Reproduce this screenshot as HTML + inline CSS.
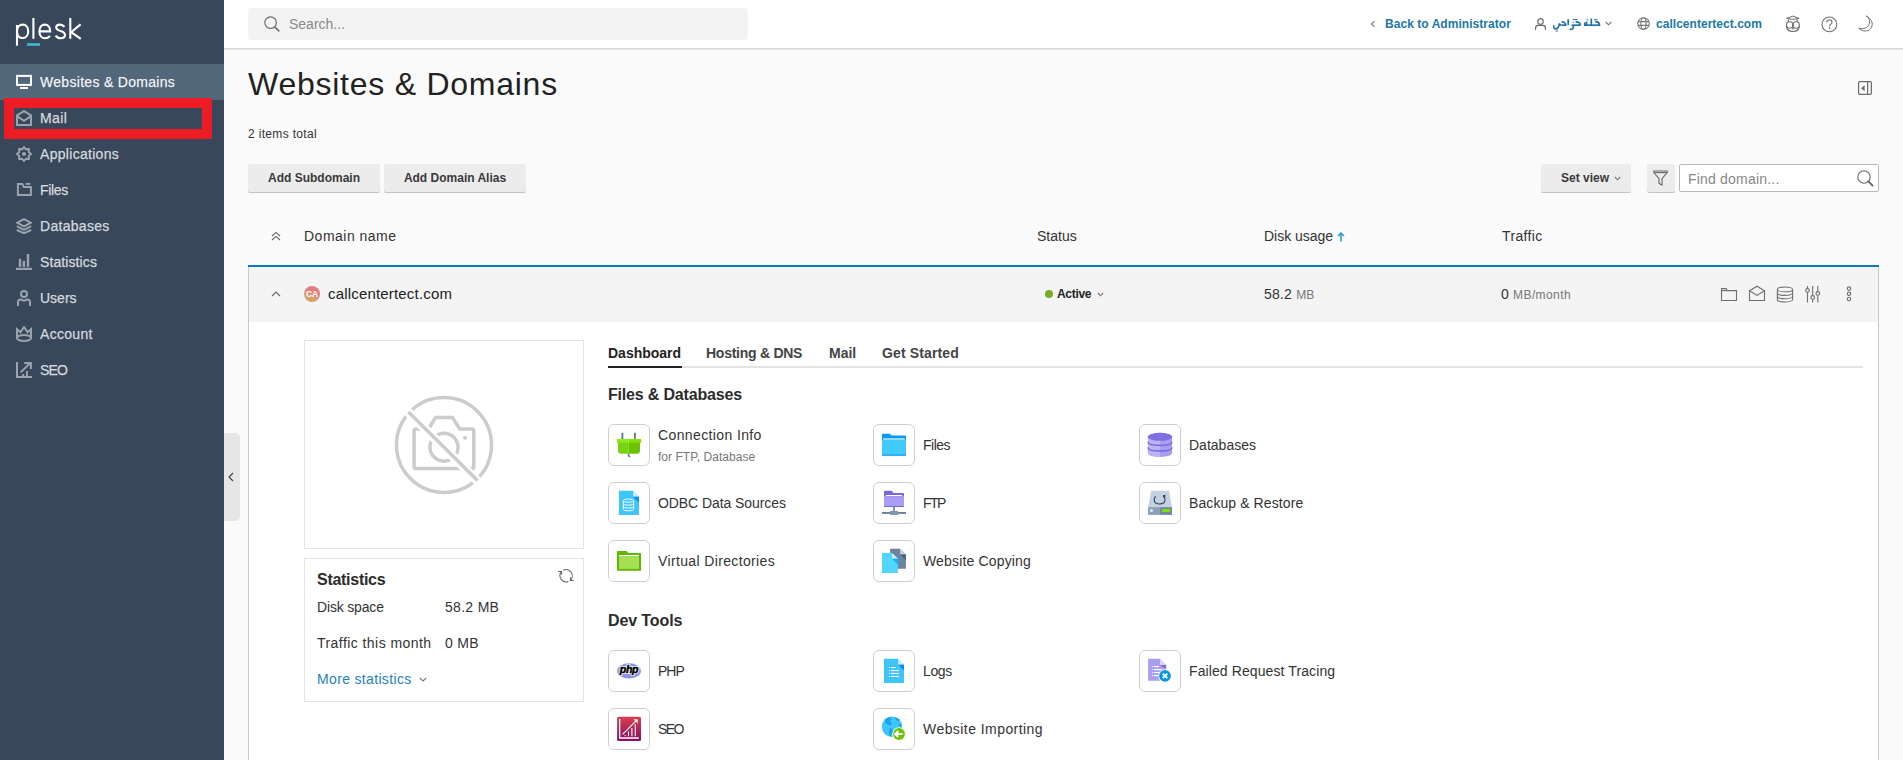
<!DOCTYPE html>
<html><head><meta charset="utf-8">
<style>
*{box-sizing:border-box;margin:0;padding:0}
html,body{width:1903px;height:760px;overflow:hidden;background:#fafafa;font-family:"Liberation Sans",sans-serif;color:#222}
.a{position:absolute;white-space:nowrap}
#side{position:absolute;left:0;top:0;width:224px;height:760px;background:#38475a}
.nav{position:absolute;left:0;width:224px;height:36px}
.nav .t{position:absolute;left:40px;top:10px;font-size:14px;line-height:16px;color:#d5d9de;-webkit-text-stroke:0.25px #d5d9de;letter-spacing:0.3px}
.nav svg{position:absolute;left:16px;top:10px}
#hdr{position:absolute;left:224px;top:0;width:1679px;height:49px;background:#fff;border-bottom:1px solid #d8d8d8;box-shadow:0 1px 1px rgba(0,0,0,.08)}
.link{color:#2078a8}
.btn{position:absolute;height:28px;background:#ececec;border-radius:2px;box-shadow:0 1px 0 #c4c4c4;font-size:13px;font-weight:bold;color:#3a3a3a;text-align:center;line-height:28px}
.ico{position:absolute;width:42px;height:42px;border:1px solid #d6d6d6;border-radius:5px;background:#fff}
.ico svg{position:absolute;left:8px;top:8px}
.it{position:absolute;font-size:14px;color:#333;letter-spacing:0.3px;white-space:nowrap}
</style></head>
<body>
<div id="side">
  <svg class="a" style="left:0;top:0" width="100" height="60" viewBox="0 0 100 60">
    <g fill="none" stroke="#fff" stroke-width="2.1" stroke-linecap="butt">
      <path d="M17 45.7V25"/>
      <path d="M17 31.2C17 27 19.5 24.6 22.8 24.6C26 24.6 28.2 27.2 28.2 31.2C28.2 35.4 26 38 22.8 38C19.6 38 17 35.8 17 32"/>
      <path d="M33.4 18V38.8"/>
      <path d="M39.6 31.4H50.2C50.2 27.2 48 24.6 44.8 24.6C41.6 24.6 39.4 27.4 39.4 31.4C39.4 35.6 41.8 38.2 45 38.2C47 38.2 48.6 37.4 50 36"/>
      <path d="M64.4 26.8C63.4 25.4 61.8 24.6 60 24.6C57.8 24.6 56.2 25.8 56.2 27.6C56.2 29.6 58 30.2 60.4 30.9C63 31.6 65 32.6 65 35C65 37 63.2 38.2 60.6 38.2C58.4 38.2 56.6 37.2 55.6 35.6"/>
      <path d="M70.3 18V38.8"/>
      <path d="M80.6 24.4L71.2 32.2L80.8 38.8"/>
    </g>
    <rect x="27" y="43.2" width="13" height="2.6" fill="#45b4d9"/>
  </svg>
  <div class="nav" style="top:64px;background:#53677a"><svg width="16" height="16" viewBox="0 0 16 16"><rect x="1" y="1.9" width="14" height="9" fill="none" stroke="#fff" stroke-width="2"/><rect x="4" y="13" width="8" height="2" fill="#fff"/></svg><span class="t" style="color:#fff">Websites &amp; Domains</span></div>
  <div class="nav" style="top:100px"><svg width="16" height="16" viewBox="0 0 16 16" fill="none" stroke="#9ba4ae" stroke-width="2" stroke-linejoin="miter"><path d="M1 5.4L8 1.1L15 5.4V14.9H1Z"/><path d="M1.4 6.4L8 10.8L14.6 6.4"/></svg><span class="t" style="letter-spacing:0.43px">Mail</span></div>
  <div class="nav" style="top:136px"><svg width="16" height="16" viewBox="0 0 16 16" fill="none" stroke="#9ba4ae" stroke-width="1.9" stroke-linejoin="round"><path d="M8.00 1.00 L9.95 3.29 L12.95 3.05 L12.71 6.05 L15.00 8.00 L12.71 9.95 L12.95 12.95 L9.95 12.71 L8.00 15.00 L6.05 12.71 L3.05 12.95 L3.29 9.95 L1.00 8.00 L3.29 6.05 L3.05 3.05 L6.05 3.29Z"/><circle cx="8" cy="8" r="2" fill="#9ba4ae" stroke="none"/></svg><span class="t">Applications</span></div>
  <div class="nav" style="top:172px"><svg width="16" height="16" viewBox="0 0 16 16" fill="none" stroke="#9ba4ae" stroke-width="2"><path d="M1.9 1.9H6.4L7.8 5.1H14.9V13H1.9Z"/><path d="M9.6 1.9H14.3"/></svg><span class="t" style="letter-spacing:-0.3px">Files</span></div>
  <div class="nav" style="top:208px"><svg width="16" height="16" viewBox="0 0 16 16" fill="none" stroke="#9ba4ae" stroke-width="2" stroke-linejoin="miter"><path d="M8 1.1L14.8 4.7L8 8.3L1.2 4.7Z"/><path d="M0.8 8.2L8 11.8L15.2 8.2"/><path d="M0.8 12L8 15.2L15.2 12"/></svg><span class="t">Databases</span></div>
  <div class="nav" style="top:244px"><svg width="16" height="16" viewBox="0 0 16 16" fill="#9ba4ae"><rect x="2.8" y="4.8" width="2.4" height="8.1"/><rect x="6.7" y="6.9" width="2.4" height="6"/><rect x="10.8" y="-0.2" width="2.4" height="13.1"/><rect x="0" y="13.8" width="16" height="2.2"/></svg><span class="t" style="letter-spacing:0.1px">Statistics</span></div>
  <div class="nav" style="top:280px"><svg width="16" height="16" viewBox="0 0 16 16" fill="none" stroke="#9ba4ae" stroke-width="2"><circle cx="8" cy="4" r="3"/><path d="M2 15.9V12.4C2 10.6 3.2 9.6 4.6 9.6C6 9.6 6.8 10.8 8 10.8C9.2 10.8 10 9.6 11.4 9.6C12.8 9.6 14 10.6 14 12.4V15.9"/></svg><span class="t" style="letter-spacing:0px">Users</span></div>
  <div class="nav" style="top:316px"><svg width="16" height="16" viewBox="0 0 16 16" fill="none" stroke="#9ba4ae" stroke-width="2" stroke-linejoin="miter"><path d="M1 12V3.2L4.4 6.2L8 1L11.6 6.2L15 3.2V12"/><ellipse cx="8" cy="12" rx="7" ry="3"/></svg><span class="t">Account</span></div>
  <div class="nav" style="top:352px"><svg width="16" height="16" viewBox="0 0 16 16" fill="none" stroke="#9ba4ae" stroke-width="2"><path d="M1 0V15H16"/><path d="M4.6 10.4L13.6 1.8"/><path d="M8.2 1.1H14.9V6.9"/><path d="M7.15 12.1V14M10.95 9.1V14"/></svg><span class="t" style="letter-spacing:-0.9px">SEO</span></div>
  <div class="a" style="left:4px;top:98px;width:208px;height:41px;border:10px solid #ed1c24"></div>
</div>
<div id="hdr">
  <div class="a" style="left:24px;top:8px;width:500px;height:32px;background:#f3f3f3;border-radius:4px"></div>
  <svg class="a" style="left:40px;top:16px" width="16" height="16" viewBox="0 0 16 16" fill="none" stroke="#737373" stroke-width="1.2"><circle cx="6.6" cy="6.6" r="5.8"/><path d="M10.8 10.8L14.8 14.8" stroke-width="1.7" stroke-linecap="round"/></svg>
  <div class="a" style="left:65px;top:16px;font-size:14px;line-height:16px;color:#8a8a8a;letter-spacing:0px">Search...</div>
  <svg class="a" style="left:1146px;top:20px" width="6" height="8" viewBox="0 0 6 8" fill="none" stroke="#777" stroke-width="1.1"><path d="M4.5 1.2L1.6 4L4.5 6.8"/></svg>
  <div class="a link" style="left:1161px;top:16px;font-size:12px;line-height:16px;letter-spacing:0.05px;font-weight:bold">Back to Administrator</div>
  <svg class="a" style="left:1311px;top:18px" width="11" height="12" viewBox="0 0 11 12" fill="none" stroke="#666" stroke-width="1.1"><circle cx="5.5" cy="3.4" r="2.8"/><path d="M0.6 12V10C0.6 8.4 1.8 7.4 3.2 7.4H7.8C9.2 7.4 10.4 8.4 10.4 10V12"/></svg>
  <svg class="a" style="left:1329px;top:18px" width="48" height="14" viewBox="0 0 48 14" fill="none" stroke="#1f72a3" stroke-width="1.7" stroke-linecap="butt">
  <path d="M31 7.2H47.2"/><path d="M46.4 7.2C46.4 5 45 3.6 42.2 3.6"/><path d="M38.3 0.6V7.2"/><path d="M33.6 3.6V7.2"/><path d="M31.8 4.4V7.2"/>
  <path d="M41 1.7H44.6M33.6 1.7H35.2" stroke-width="1"/>
  <path d="M18.6 7.2H27.6"/><path d="M27.2 7.2C27.2 5 25.8 3.8 22.6 3.8"/><path d="M20.2 7.2C21 10 19.8 11.8 16.6 11.4"/><path d="M15.2 1.2V7.2"/>
  <path d="M19.8 1.6H24.6M19.6 4.2H20.8" stroke-width="1"/>
  <path d="M8.6 7.2H13.4"/><path d="M12.4 7.2C12.6 4.6 10.4 3.4 8.6 4"/>
  <path d="M8.6 7.2C8 7.2 6.8 6.8 6.2 5.6"/><path d="M6.2 5.4C6.2 9.6 4.2 11.4 1.6 10.6C0.6 10 0.4 8.4 1 7.4"/>
  <path d="M2.6 13H5" stroke-width="1"/>
</svg>
  <svg class="a" style="left:1381px;top:21px" width="7" height="5" viewBox="0 0 7 5" fill="none" stroke="#777" stroke-width="1.1"><path d="M0.8 1L3.5 3.8L6.2 1"/></svg>
  <svg class="a" style="left:1413px;top:17px" width="13" height="13" viewBox="0 0 13 13" fill="none" stroke="#777" stroke-width="1.1"><circle cx="6.5" cy="6.5" r="5.8"/><ellipse cx="6.5" cy="6.5" rx="2.6" ry="5.8"/><path d="M1 4.6H12M1 8.4H12"/></svg>
  <div class="a link" style="left:1432px;top:16px;font-size:12px;line-height:16px;letter-spacing:0.03px;font-weight:bold">callcentertect.com</div>
  <svg class="a" style="left:1556px;top:10px" width="100" height="28" viewBox="0 0 100 28" fill="none" stroke="#707070" stroke-width="1.1">
<path d="M6.5 8.4L12.9 6.1L19.2 8.4L12.9 9.4Z" fill="#fff" stroke-width="1"/>
<path d="M8.9 9.4L8.2 11.6M16.9 9.4L17.6 11.6" stroke-width="1.3"/>
<circle cx="9.7" cy="15" r="3.2"/><circle cx="16.1" cy="15" r="3.2"/>
<path d="M6.4 15.6C6.6 19.4 9.2 21.5 12.9 21.5C16.6 21.5 19.2 19.4 19.4 15.6"/>
<path d="M12.9 14V19.4" stroke-width="1.4"/>
<circle cx="49.4" cy="14.4" r="7.4"/>
<path d="M46.8 12.5C46.8 10.8 48 9.8 49.4 9.8C50.9 9.8 52 10.8 52 12.2C52 14 49.5 14.2 49.5 16.2"/>
<circle cx="49.5" cy="17.9" r="0.8" fill="#707070" stroke="none"/>
<path d="M86.2 6C90 7.8 92.2 11 92.2 14.2C92.2 18.4 89 21 85.4 21C82.6 21 80.2 19.8 78.8 18.1C80 18.5 81.4 18.6 82.6 18.6C86.6 18.6 89.6 15.6 89.6 11.6C89.6 9.5 88.4 7.5 86.2 6Z" stroke-width="1"/>
</svg>
</div>

<div class="a" style="left:248px;top:64px;font-size:32px;line-height:40px;color:#222;letter-spacing:0.75px">Websites &amp; Domains</div>
<svg class="a" style="left:1858px;top:81px" width="14" height="14" viewBox="0 0 14 14" fill="none" stroke="#6b6b6b" stroke-width="1.2"><rect x="0.6" y="0.6" width="12.8" height="12.8" rx="1.3"/><path d="M9.6 0.6V13.4"/><path d="M3 7.2L6.6 4.2V10.2Z" fill="#6b6b6b" stroke="none"/></svg>
<div class="a" style="left:248px;top:126px;font-size:12px;line-height:16px;color:#333;letter-spacing:0.33px">2 items total</div>
<div class="btn" style="left:248px;top:164px;width:132px;font-size:12px">Add Subdomain</div>
<div class="btn" style="left:384px;top:164px;width:142px;font-size:12px">Add Domain Alias</div>
<div class="btn" style="left:1541px;top:164px;width:90px;font-size:12px;text-align:left;padding-left:20px">Set view</div>
<svg class="a" style="left:1614px;top:176px" width="7" height="5" viewBox="0 0 7 5" fill="none" stroke="#777" stroke-width="1.1"><path d="M0.8 1L3.5 3.8L6.2 1"/></svg>
<div class="btn" style="left:1647px;top:164px;width:28px"></div>
<svg class="a" style="left:1653px;top:170px" width="15" height="16" viewBox="0 0 15 16" fill="none" stroke="#666" stroke-width="1.1"><path d="M0.8 1H14.2V2.6L9 8.6V15L6 13.4V8.6L0.8 2.6Z"/><path d="M1.4 2.6H13.6"/></svg>
<div class="a" style="left:1679px;top:164px;width:200px;height:28px;background:#fff;border:1px solid #b8b8b8;border-radius:2px"></div>
<div class="a" style="left:1688px;top:171px;font-size:14px;line-height:16px;color:#888;letter-spacing:0.2px">Find domain...</div>
<svg class="a" style="left:1857px;top:170px" width="17" height="17" viewBox="0 0 17 17" fill="none" stroke="#666" stroke-width="1.1"><circle cx="7" cy="7" r="6.2"/><path d="M11.4 11.4L15.6 15.6" stroke-width="2" stroke-linecap="round"/></svg>

<svg class="a" style="left:271px;top:231px" width="10" height="10" viewBox="0 0 10 10" fill="none" stroke="#666" stroke-width="1.1"><path d="M1 5L5 1.4L9 5M1 9L5 5.4L9 9"/></svg>
<div class="a" style="left:304px;top:228px;font-size:14px;line-height:16px;color:#333;letter-spacing:0.49px">Domain name</div>
<div class="a" style="left:1037px;top:228px;font-size:14px;line-height:16px;color:#333;letter-spacing:0.02px">Status</div>
<div class="a" style="left:1264px;top:228px;font-size:14px;line-height:16px;color:#333;letter-spacing:-0.03px">Disk usage</div>
<svg class="a" style="left:1337px;top:232px" width="8" height="10" viewBox="0 0 8 10" fill="none" stroke="#2a9ad0" stroke-width="1.6"><path d="M4 9.6V1.4M1 4L4 1.2L7 4"/></svg>
<div class="a" style="left:1502px;top:228px;font-size:14px;line-height:16px;color:#333;letter-spacing:0.37px">Traffic</div>

<div class="a" style="left:248px;top:265px;width:1631px;height:2px;background:#0d78b6"></div>
<div class="a" style="left:248px;top:267px;width:1631px;height:493px;background:#fff;border-left:1px solid #c9c9c9;border-right:1px solid #c9c9c9"></div>
<div class="a" style="left:249px;top:267px;width:1629px;height:55px;background:#f4f4f4"></div>
<svg class="a" style="left:271px;top:290px" width="10" height="7" viewBox="0 0 10 7" fill="none" stroke="#666" stroke-width="1.1"><path d="M1 6L5 2L9 6"/></svg>
<div class="a" style="left:304px;top:286px;width:16px;height:16px;border-radius:50%;background:linear-gradient(214deg,#e57e80 50%,#d6a06e 50%);color:#fff;font-size:8.5px;font-weight:bold;text-align:center;line-height:16px;letter-spacing:-0.2px">CA</div>
<div class="a" style="left:328px;top:285px;font-size:15px;line-height:18px;color:#222;letter-spacing:0.18px">callcentertect.com</div>
<div class="a" style="left:1045px;top:290px;width:8px;height:8px;border-radius:50%;background:#78ab1f"></div>
<div class="a" style="left:1057px;top:287px;font-size:12px;line-height:14px;color:#222;font-weight:bold;letter-spacing:-0.3px">Active</div>
<svg class="a" style="left:1097px;top:292px" width="7" height="5" viewBox="0 0 7 5" fill="none" stroke="#777" stroke-width="1.1"><path d="M0.8 1L3.5 3.8L6.2 1"/></svg>
<div class="a" style="left:1264px;top:286px;font-size:14px;line-height:16px;color:#333;letter-spacing:0.2px">58.2 <span style="font-size:12px;color:#777">MB</span></div>
<div class="a" style="left:1501px;top:286px;font-size:14px;line-height:16px;color:#333;letter-spacing:0.2px">0 <span style="font-size:12px;color:#777;letter-spacing:0.4px">MB/month</span></div>
<svg class="a" style="left:1720px;top:286px" width="18" height="17" viewBox="0 0 18 17" fill="none" stroke="#6f6f6f" stroke-width="1.1"><path d="M1.5 14.5V2.6H6.2L7.2 4.6H16.5V14.5Z"/><path d="M1.5 4.6H7.2"/></svg>
<svg class="a" style="left:1748px;top:285px" width="18" height="17" viewBox="0 0 18 17" fill="none" stroke="#6f6f6f" stroke-width="1.1"><path d="M1.5 5.8L9 1.2L16.5 5.8V15.5H1.5Z"/><path d="M1.5 5.8L9 10.4L16.5 5.8"/></svg>
<svg class="a" style="left:1776px;top:286px" width="18" height="17" viewBox="0 0 18 17" fill="none" stroke="#6f6f6f" stroke-width="1.1"><ellipse cx="9" cy="3.4" rx="7.6" ry="2.4"/><path d="M1.4 3.4V13.4C1.4 14.8 4.8 16 9 16C13.2 16 16.6 14.8 16.6 13.4V3.4"/><path d="M1.4 6.8C1.4 8.2 4.8 9.4 9 9.4C13.2 9.4 16.6 8.2 16.6 6.8M1.4 10.2C1.4 11.6 4.8 12.8 9 12.8C13.2 12.8 16.6 11.6 16.6 10.2"/></svg>
<svg class="a" style="left:1804px;top:286px" width="17" height="17" viewBox="0 0 17 17" fill="none" stroke="#6f6f6f" stroke-width="1.1"><path d="M3.5 0V2.6M3.5 6.2V16.4M8.7 0V9.6M8.7 13.2V16.4M13.8 0V5.6M13.8 9.2V16.4"/><circle cx="3.5" cy="4.4" r="1.8"/><circle cx="8.7" cy="11.4" r="1.8"/><circle cx="13.8" cy="7.4" r="1.8"/></svg>
<svg class="a" style="left:1846px;top:286px" width="6" height="16" viewBox="0 0 6 16" fill="none" stroke="#6f6f6f" stroke-width="1.1"><circle cx="3" cy="2.6" r="1.7"/><circle cx="3" cy="7.8" r="1.7"/><circle cx="3" cy="13" r="1.7"/></svg>

<div class="a" style="left:224px;top:433px;width:16px;height:88px;background:#e6e6e6;border-radius:0 5px 5px 0"></div>
<svg class="a" style="left:228px;top:472px" width="6" height="10" viewBox="0 0 6 10" fill="none" stroke="#444" stroke-width="1.2"><path d="M5 1L1 5L5 9"/></svg>

<div class="a" style="left:304px;top:340px;width:280px;height:209px;border:1px solid #e4e4e4;background:#fff"></div>
<svg class="a" style="left:389px;top:390px" width="110" height="110" viewBox="0 0 110 110" fill="none" stroke="#cccccc" stroke-width="3.5"><circle cx="55" cy="55" r="47.5"/><path d="M27 39H39.5L46.5 27.6H63.5L70.8 39H83Q84.8 39 84.8 40.8V76.8Q84.8 78.6 83 78.6H27Q25.1 78.6 25.1 76.8V40.8Q25.1 39 27 39Z" stroke-linejoin="round"/><circle cx="55" cy="57.2" r="14"/><circle cx="76" cy="47.8" r="2" fill="#ccc" stroke="none"/><path d="M15.5 18.5L92 94.5" stroke="#fff" stroke-width="9"/><path d="M19.5 22L88.5 90.5"/></svg>

<div class="a" style="left:304px;top:558px;width:280px;height:144px;border:1px solid #e4e4e4;background:#fff"></div>
<div class="a" style="left:317px;top:570px;font-size:16px;line-height:20px;color:#2c2c2c;font-weight:bold;letter-spacing:-0.28px">Statistics</div>
<svg class="a" style="left:554px;top:564px" width="24" height="24" viewBox="0 0 24 24" fill="none" stroke="#666" stroke-width="1.05"><path d="M9.3 6.2A6.3 6.3 0 0 1 16.4 16.4"/><path d="M16.4 13.2V16.4H19.8"/><path d="M14.5 17.5A6.3 6.3 0 0 1 7.6 7.4"/><path d="M4.1 7.4H7.6V10.7"/></svg>
<div class="a" style="left:317px;top:599px;font-size:14px;line-height:16px;color:#333;letter-spacing:-0.17px">Disk space</div>
<div class="a" style="left:445px;top:599px;font-size:14px;line-height:16px;color:#333;letter-spacing:0.3px">58.2 MB</div>
<div class="a" style="left:317px;top:635px;font-size:14px;line-height:16px;color:#333;letter-spacing:0.44px">Traffic this month</div>
<div class="a" style="left:445px;top:635px;font-size:14px;line-height:16px;color:#333;letter-spacing:0.3px">0 MB</div>
<div class="a link" style="left:317px;top:671px;font-size:14px;line-height:16px;letter-spacing:0.34px;color:#2383bf">More statistics</div>
<svg class="a" style="left:419px;top:677px" width="8" height="5" viewBox="0 0 8 5" fill="none" stroke="#777" stroke-width="1.1"><path d="M0.8 1L4 4L7.2 1"/></svg>

<div class="a" style="left:608px;top:366px;width:1255px;height:2px;background:#e3e3e3"></div>
<div class="a" style="left:608px;top:366px;width:74px;height:2px;background:#222"></div>
<div class="a" style="left:608px;top:345px;font-size:14px;line-height:16px;color:#222;font-weight:bold;letter-spacing:0">Dashboard</div>
<div class="a" style="left:706px;top:345px;font-size:14px;line-height:16px;color:#444;font-weight:bold;letter-spacing:-0.26px">Hosting &amp; DNS</div>
<div class="a" style="left:829px;top:345px;font-size:14px;line-height:16px;color:#444;font-weight:bold;letter-spacing:0">Mail</div>
<div class="a" style="left:882px;top:345px;font-size:14px;line-height:16px;color:#444;font-weight:bold;letter-spacing:0.13px">Get Started</div>

<div class="a" style="left:608px;top:385px;font-size:16px;line-height:20px;color:#2c2c2c;font-weight:bold;letter-spacing:-0.18px">Files &amp; Databases</div>
<div class="a" style="left:608px;top:611px;font-size:16px;line-height:20px;color:#2c2c2c;font-weight:bold;letter-spacing:-0.11px">Dev Tools</div>

<svg class="a" style="left:608px;top:424px" width="42" height="42" viewBox="0 0 42 42"><rect x="0.5" y="0.5" width="41" height="41" rx="5.5" fill="#fff" stroke="#cfcfcf"/><path d="M14.4 8.8V15M26.9 8.8V15" stroke="#62789a" stroke-width="1.9"/>
<path d="M20.6 29.5V31.4Q20.8 32.6 22.2 32.6" fill="none" stroke="#62789a" stroke-width="1.6"/>
<path d="M8.9 14.9H20.8V18.9H9.6Q8.9 18.9 8.9 18Z" fill="#8ee81c"/>
<path d="M20.8 14.9H33.1V18Q33.1 18.9 32.4 18.9H20.8Z" fill="#86e000"/>
<path d="M10 18.8H20.8V29.8H13.2Q10 29.8 10 26.6Z" fill="#78d410"/>
<path d="M20.8 18.8H32V26.6Q32 29.8 28.8 29.8H20.8Z" fill="#6cc400"/></svg>
<div class="it" style="left:658px;top:427px;line-height:16px;letter-spacing:0.38px">Connection Info</div>
<div class="it" style="left:658px;top:450px;font-size:12px;line-height:14px;color:#777;letter-spacing:0.04px">for FTP, Database</div>
<svg class="a" style="left:873px;top:424px" width="42" height="42" viewBox="0 0 42 42"><rect x="0.5" y="0.5" width="41" height="41" rx="5.5" fill="#fff" stroke="#cfcfcf"/><path d="M9 10.5Q9 9.8 9.7 9.8H16.8L18.6 11.6H32.2Q33 11.6 33 12.4V14.4H9Z" fill="#0a98f0"/>
<rect x="9" y="14" width="24" height="17.8" fill="#0a98f0"/>
<rect x="10.2" y="14.4" width="21.6" height="1.3" fill="#fff"/>
<rect x="9" y="15.7" width="24" height="14.9" fill="#42c9fd"/></svg>
<div class="it" style="left:923px;top:437px;line-height:16px;letter-spacing:-0.5px">Files</div>
<svg class="a" style="left:1139px;top:424px" width="42" height="42" viewBox="0 0 42 42"><rect x="0.5" y="0.5" width="41" height="41" rx="5.5" fill="#fff" stroke="#cfcfcf"/><path d="M8.9 12.6V28.8Q8.9 32.9 21 32.9Q33.1 32.9 33.1 28.8V12.6Z" fill="#a89ef1"/>
<path d="M8.9 12.6V28.8Q8.9 32.9 21 32.9V12.6Z" fill="#bcb3f7"/>
<path d="M8.9 17.8Q8.9 21.4 21 21.4Q33.1 21.4 33.1 17.8" fill="none" stroke="#7163d6" stroke-width="1.3"/>
<path d="M8.9 23.4Q8.9 27 21 27Q33.1 27 33.1 23.4" fill="none" stroke="#7163d6" stroke-width="1.3"/>
<ellipse cx="21" cy="12.8" rx="12.1" ry="4" fill="#7d70e0"/></svg>
<div class="it" style="left:1189px;top:437px;line-height:16px;letter-spacing:0.01px">Databases</div>
<svg class="a" style="left:608px;top:482px" width="42" height="42" viewBox="0 0 42 42"><rect x="0.5" y="0.5" width="41" height="41" rx="5.5" fill="#fff" stroke="#cfcfcf"/><path d="M11 8.8H25.1L31 14.7V32.9H11Z" fill="#3ec5fb"/>
<path d="M25.1 8.8L31 14.7H25.1Z" fill="#c8eeff"/>
<path d="M25.1 14.7H31V20.6Z" fill="#0b8de6"/>
<g fill="none" stroke="#fff" stroke-width="0.95"><ellipse cx="20.5" cy="18.6" rx="5.2" ry="1.6"/><path d="M15.3 18.6V27.2Q15.3 28.8 20.5 28.8Q25.7 28.8 25.7 27.2V18.6M15.3 21.6Q15.3 23.2 20.5 23.2Q25.7 23.2 25.7 21.6M15.3 24.5Q15.3 26.1 20.5 26.1Q25.7 26.1 25.7 24.5"/></g></svg>
<div class="it" style="left:658px;top:495px;line-height:16px;letter-spacing:-0.08px">ODBC Data Sources</div>
<svg class="a" style="left:873px;top:482px" width="42" height="42" viewBox="0 0 42 42"><rect x="0.5" y="0.5" width="41" height="41" rx="5.5" fill="#fff" stroke="#cfcfcf"/><path d="M11 9.6Q11 8.8 11.8 8.8H18.6L20.4 10.9H30.2Q31 10.9 31 11.7V24.9H11Z" fill="#7868de"/>
<rect x="12.8" y="13" width="16.4" height="1.2" fill="#fff"/>
<rect x="11" y="14.2" width="20" height="10.2" fill="#a99ef1"/>
<rect x="11" y="24" width="20" height="0.9" fill="#7868de"/>
<rect x="20.2" y="24.9" width="1.7" height="4.6" fill="#6c8099"/>
<rect x="8.9" y="30" width="24.1" height="1.9" fill="#6c8099"/>
<rect x="17.1" y="29" width="8" height="3.9" fill="#8194ac"/></svg>
<div class="it" style="left:923px;top:495px;line-height:16px;letter-spacing:-1.5px">FTP</div>
<svg class="a" style="left:1139px;top:482px" width="42" height="42" viewBox="0 0 42 42"><rect x="0.5" y="0.5" width="41" height="41" rx="5.5" fill="#fff" stroke="#cfcfcf"/><path d="M12.2 8.8H30L33 25.1H9.1Z" fill="#c5d0e2"/>
<rect x="9.1" y="25.1" width="11.9" height="7.8" fill="#8ea0b9"/>
<rect x="21" y="25.1" width="12" height="7.8" fill="#7489a6"/>
<circle cx="12.5" cy="28.6" r="1.5" fill="#c8f2ff"/>
<rect x="23" y="27" width="8" height="3" rx="0.6" fill="#7ee000"/>
<path d="M16.6 14.4Q15.2 16 15.2 17.8Q15.2 22 20.7 22Q26 22 26 17.6Q26 16.2 25 14.6" fill="none" stroke="#2b4560" stroke-width="1.1"/>
<path d="M24 13H26.3V15.4H24Z" fill="#2b4560"/></svg>
<div class="it" style="left:1189px;top:495px;line-height:16px;letter-spacing:0.09px">Backup &amp; Restore</div>
<svg class="a" style="left:608px;top:540px" width="42" height="42" viewBox="0 0 42 42"><rect x="0.5" y="0.5" width="41" height="41" rx="5.5" fill="#fff" stroke="#cfcfcf"/><path d="M9 11.8Q9 11 9.8 11H18.6L20.2 13H32.2Q33 13 33 13.8V30.8H9Z" fill="#5fb800"/>
<rect x="11" y="15" width="20" height="1.3" fill="#fff"/>
<rect x="11" y="16.3" width="20" height="12.6" fill="#a4e052"/></svg>
<div class="it" style="left:658px;top:553px;line-height:16px;letter-spacing:0.36px">Virtual Directories</div>
<svg class="a" style="left:873px;top:540px" width="42" height="42" viewBox="0 0 42 42"><rect x="0.5" y="0.5" width="41" height="41" rx="5.5" fill="#fff" stroke="#cfcfcf"/><path d="M17.1 8.8H27.1L32.9 14.6V28.7H17.1Z" fill="#6d84a0"/>
<path d="M27.1 8.8L32.9 14.6H27.1Z" fill="#c6cfe0"/>
<path d="M27.1 14.6H32.9V20.5Z" fill="#4a6282"/>
<path d="M9 13H19.1L24.9 18.8V32.9H9Z" fill="#50d6ff"/>
<path d="M19.1 13L24.9 18.8H19.1Z" fill="#c9f0ff"/>
<path d="M19.1 18.8H24.9V24.6Z" fill="#0eb1f5"/></svg>
<div class="it" style="left:923px;top:553px;line-height:16px;letter-spacing:0.16px">Website Copying</div>
<svg class="a" style="left:608px;top:650px" width="42" height="42" viewBox="0 0 42 42"><rect x="0.5" y="0.5" width="41" height="41" rx="5.5" fill="#fff" stroke="#cfcfcf"/><ellipse cx="21" cy="20.9" rx="11.9" ry="7.7" fill="#8c93e6"/>
<g font-family="Liberation Sans" font-size="10.5" font-weight="bold" font-style="italic" text-anchor="middle" letter-spacing="-0.2"><text x="21" y="23.2" fill="#fff" stroke="#fff" stroke-width="2.2" stroke-linejoin="round">php</text><text x="21" y="23.2" fill="#000" stroke="#000" stroke-width="0.5">php</text></g></svg>
<div class="it" style="left:658px;top:663px;line-height:16px;letter-spacing:-1.0px">PHP</div>
<svg class="a" style="left:873px;top:650px" width="42" height="42" viewBox="0 0 42 42"><rect x="0.5" y="0.5" width="41" height="41" rx="5.5" fill="#fff" stroke="#cfcfcf"/><path d="M11 8.8H25.1L31 14.7V32.9H11Z" fill="#3ec5fb"/>
<path d="M25.1 8.8L31 14.7H25.1Z" fill="#c8eeff"/>
<path d="M25.1 14.7H31V20.6Z" fill="#0b8de6"/>
<g fill="#fff"><rect x="15.9" y="17" width="1" height="1.1"/><rect x="18.1" y="17" width="4.9" height="1.1"/><rect x="15.9" y="20" width="1" height="1.1"/><rect x="18.1" y="20" width="7.9" height="1.1"/><rect x="15.9" y="22.9" width="1" height="1.1"/><rect x="18.1" y="22.9" width="7.9" height="1.1"/><rect x="15.9" y="25.9" width="1" height="1.1"/><rect x="18.1" y="25.9" width="7.9" height="1.1"/></g></svg>
<div class="it" style="left:923px;top:663px;line-height:16px;letter-spacing:-0.37px">Logs</div>
<svg class="a" style="left:1139px;top:650px" width="42" height="42" viewBox="0 0 42 42"><rect x="0.5" y="0.5" width="41" height="41" rx="5.5" fill="#fff" stroke="#cfcfcf"/><path d="M9.1 8.8H21L27.1 14.9V30.7H9.1Z" fill="#a99ef1"/>
<path d="M21 8.8L27.1 14.9H21Z" fill="#ead2ff"/>
<path d="M21 14.9H27.1V18.9Z" fill="#7a69de"/>
<g fill="#fff"><rect x="12.9" y="16" width="1" height="1.1"/><rect x="14.9" y="16" width="5" height="1.1"/><rect x="12.9" y="19" width="1" height="1.1"/><rect x="14.9" y="19" width="8" height="1.1"/><rect x="12.9" y="22" width="1" height="1.1"/><rect x="14.9" y="22" width="8" height="1.1"/><rect x="12.9" y="25" width="1" height="1.1"/><rect x="14.9" y="25" width="5" height="1.1"/></g>
<circle cx="26" cy="25.9" r="6.7" fill="#fff"/>
<circle cx="26" cy="25.9" r="5.9" fill="#0a95e6"/>
<path d="M23.7 23.6L28.3 28.2M28.3 23.6L23.7 28.2" stroke="#fff" stroke-width="1.9"/></svg>
<div class="it" style="left:1189px;top:663px;line-height:16px;letter-spacing:0.1px">Failed Request Tracing</div>
<svg class="a" style="left:608px;top:708px" width="42" height="42" viewBox="0 0 42 42"><rect x="0.5" y="0.5" width="41" height="41" rx="5.5" fill="#fff" stroke="#cfcfcf"/><defs><linearGradient id="sg" x1="0" y1="0" x2="0" y2="1"><stop offset="0" stop-color="#da3f4c"/><stop offset="1" stop-color="#880c63"/></linearGradient></defs>
<rect x="9.1" y="8.8" width="23.9" height="24.2" rx="1.6" fill="url(#sg)"/>
<g stroke="#fff" fill="none"><path d="M11.7 11V30H30.8" stroke-width="1.3"/><path d="M14.6 26.4L28.8 12.2" stroke-width="1.1"/><path d="M20.5 28.2V23.5M23.9 28.2V19.9M27.3 28.2V16.3" stroke-width="1.1"/></g>
<path d="M25.4 11.2H29.7V15.6Z" fill="#fff"/>
<rect x="16.6" y="27" width="1.1" height="1.1" fill="#fff"/></svg>
<div class="it" style="left:658px;top:721px;line-height:16px;letter-spacing:-1.6px">SEO</div>
<svg class="a" style="left:873px;top:708px" width="42" height="42" viewBox="0 0 42 42"><rect x="0.5" y="0.5" width="41" height="41" rx="5.5" fill="#fff" stroke="#cfcfcf"/><circle cx="19" cy="18.8" r="10.2" fill="#3ec5fb"/>
<path d="M12 11.6Q14 9.6 17 9.2L18.4 11L16.8 13.4L19 15.2L17.8 17.6L14.4 16.4L12.4 14.6Z M22 9.6Q25 10 27 12L25.6 13.2L23.6 12.4Z M26.4 15.4L28.6 16.4L28 18.6L25.8 17.6Z M16.6 20.2L19 20.6L19.8 23.6L18.4 26.6L17 28.8Q15.6 26 16.2 23.4Z" fill="#1aa2ef"/>
<circle cx="26" cy="26" r="6.8" fill="#fff"/>
<circle cx="26" cy="26" r="5.9" fill="#6cc400"/>
<path d="M22.4 26H29.6M25.2 23L22.2 26L25.2 29" fill="none" stroke="#fff" stroke-width="2"/></svg>
<div class="it" style="left:923px;top:721px;line-height:16px;letter-spacing:0.44px">Website Importing</div>
</body></html>
